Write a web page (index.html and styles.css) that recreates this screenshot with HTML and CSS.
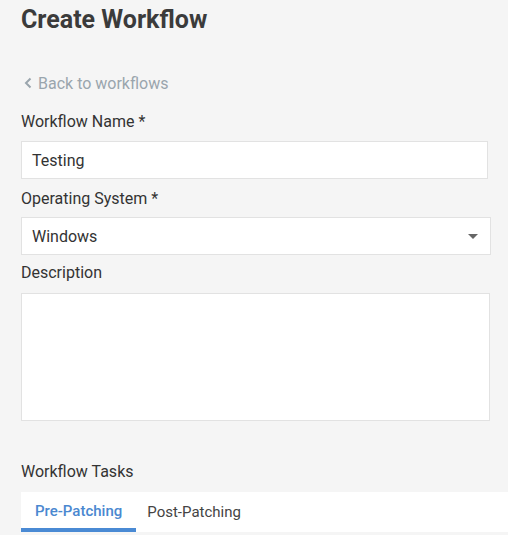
FILE: index.html
```html
<!DOCTYPE html>
<html>
<head>
<meta charset="utf-8">
<link rel="stylesheet" href="styles.css">
</head>
<body>
<div class="page">
  <h1 class="title">Create Workflow</h1>
  <a class="back"><svg class="chev" width="8" height="12" viewBox="0 0 8 12"><path d="M6.5 1.5 L2 6 L6.5 10.5" fill="none" stroke="#9aa5ad" stroke-width="2"/></svg>Back to workflows</a>
  <div class="field">
    <label class="label">Workflow Name *</label>
    <div class="input name">Testing</div>
  </div>
  <div class="field">
    <label class="label">Operating System *</label>
    <div class="input select">Windows<span class="caret"></span></div>
  </div>
  <div class="field">
    <label class="label">Description</label>
    <div class="input textarea"></div>
  </div>
  <div class="tasks">
    <div class="label">Workflow Tasks</div>
    <div class="tabs">
      <div class="tab active">Pre-Patching</div>
      <div class="tab">Post-Patching</div>
    </div>
  </div>
</div>
</body>
</html>
```
FILE: styles.css
```css
html, body {
  margin: 0;
  padding: 0;
  background: #f5f5f5;
  font-family: Roboto, "Liberation Sans", sans-serif;
  color: #333;
}
.page {
  padding: 0 0 0 21px;
}
.title {
  margin: 0;
  padding-top: 4px;
  font-size: 25px;
  font-weight: 700;
  line-height: 32px;
  color: #3b3b3b;
}
.back {
  display: flex;
  align-items: center;
  gap: 6px;
  margin-top: 36px;
  height: 22px;
  font-size: 16px;
  color: #9aa5ad;
  padding-left: 3px;
}
.field {
  display: flex;
  flex-direction: column;
}
.label {
  font-size: 16px;
  line-height: 20px;
  color: #333;
}
.field:first-of-type { margin-top: 18px; }
.field .label { margin-bottom: 9px; }
.field:nth-of-type(2) .label { margin-bottom: 8px; }
.field:nth-of-type(3) .label { margin-bottom: 10px; }
.input {
  box-sizing: border-box;
  background: #fff;
  border: 1px solid #e2e2e2;
  font-size: 16px;
  color: #333;
  padding: 0 10px;
  display: flex;
  align-items: center;
}
.name {
  width: 467px;
  height: 38px;
  margin-bottom: 10px;
}
.select {
  width: 470px;
  height: 38px;
  justify-content: space-between;
  margin-bottom: 8px;
}
.caret {
  width: 0;
  height: 0;
  border-left: 5px solid transparent;
  border-right: 5px solid transparent;
  border-top: 5px solid #666;
  margin-right: 2px;
}
.textarea {
  width: 469px;
  height: 128px;
}
.tasks {
  margin-top: 41px;
}
.tasks .label { margin-bottom: 10px; }
.tabs {
  background: #fff;
  display: flex;
  height: 40px;
}
.tab {
  box-sizing: border-box;
  height: 40px;
  padding: 0 14px;
  line-height: 40px;
  font-size: 15px;
  color: #444;
  border-bottom: 4px solid transparent;
}
.tab.active {
  color: #4a88d0;
  font-weight: 500;
  border-bottom-color: #4a8ad4;
  line-height: 38px;
}
.tab + .tab { padding-left: 11px; }
```
